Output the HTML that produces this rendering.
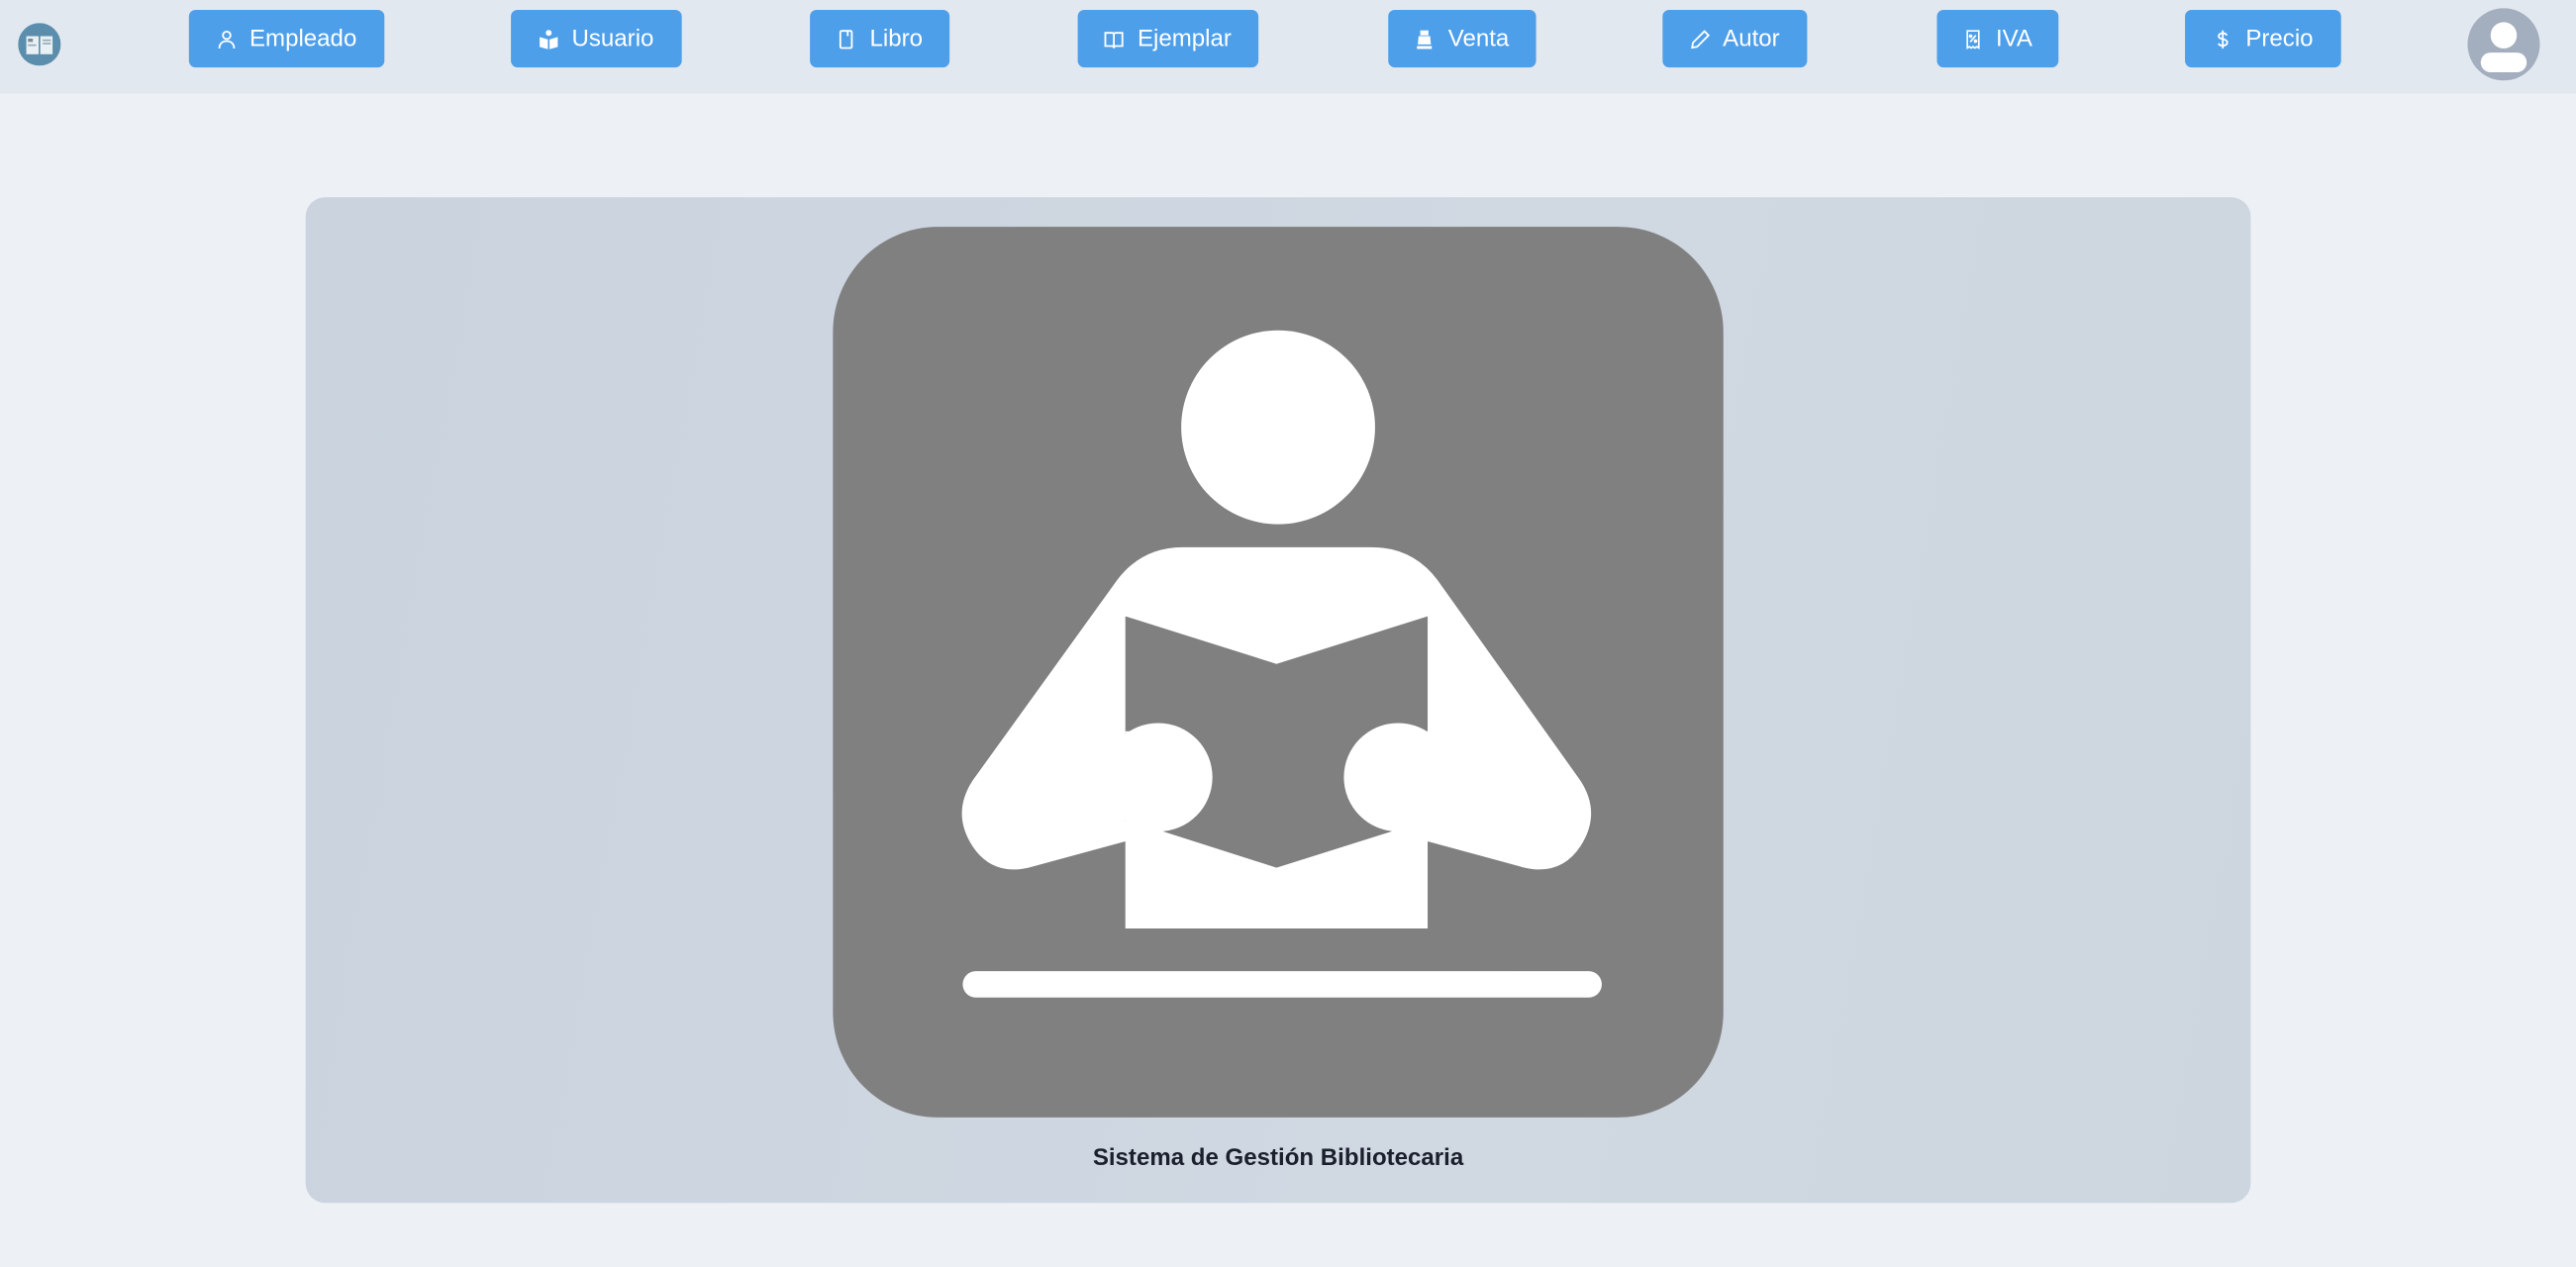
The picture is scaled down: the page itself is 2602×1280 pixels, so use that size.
<!DOCTYPE html>
<html><head><meta charset="utf-8"><style>
html,body{margin:0;padding:0;width:2602px;height:1280px;overflow:hidden;background:#edf1f6;font-family:"Liberation Sans",sans-serif}
#w{position:absolute;left:0;top:0;width:1568px;height:771px;transform:scale(1.65944,1.66018);transform-origin:0 0}
.nav{position:absolute;left:0;top:0;width:1568px;height:57px;background:#e2e8f0}
.btn{position:absolute;top:6px;height:35px;background:#4e9fea;border-radius:4px;color:#fff;font-size:14.5px;display:flex;align-items:center;justify-content:center;gap:8px;padding-top:1px;box-sizing:border-box}
.btn svg{width:12px;height:12px}
.card{position:absolute;left:186px;top:120px;width:1184px;height:612px;border-radius:12px;background:linear-gradient(100deg,#cad3de,#d0d8e2 60%,#cdd5df)}
.cap{position:absolute;left:186px;width:1184px;top:697px;text-align:center;font-weight:bold;font-size:14.5px;color:#1a202c}
</style></head><body><div id="w">
<div class="nav">
 <svg style="position:absolute;left:11px;top:14px" width="26" height="26" viewBox="0 0 26 26"><circle cx="13" cy="13" r="13" fill="#5b8eac"/><rect x="5" y="8" width="7.5" height="11" fill="#e8f0f3"/><rect x="13.5" y="8" width="7.5" height="11" fill="#e8f0f3"/><rect x="6" y="9.5" width="3" height="2" fill="#7a8d99"/><rect x="6" y="13" width="5" height="1" fill="#9ab"/><rect x="15" y="10" width="5" height="1" fill="#9ab"/><rect x="15" y="12" width="5" height="1" fill="#9ab"/></svg>
 <div class="btn" style="left:115px;width:119px"><svg viewBox="0 0 12 12" fill="none" stroke="#fff" stroke-width="1.1"><circle cx="6" cy="3.5" r="2.3"/><path d="M1.5 11.5c0-3 2-4.5 4.5-4.5s4.5 1.5 4.5 4.5"/></svg>Empleado</div>
 <div class="btn" style="left:311px;width:104px"><svg viewBox="0 0 12 12" fill="#fff"><circle cx="6" cy="2" r="1.8"/><path d="M0.5 4.5l5 1.5v6l-5-1.5zM11.5 4.5l-5 1.5v6l5-1.5z"/></svg>Usuario</div>
 <div class="btn" style="left:493px;width:85px"><svg viewBox="0 0 12 12" fill="none" stroke="#fff" stroke-width="1.1"><rect x="2.5" y="0.8" width="7" height="10.4" rx="0.8"/><path d="M7 1v3"/></svg>Libro</div>
 <div class="btn" style="left:656px;width:110px"><svg viewBox="0 0 12 12" fill="none" stroke="#fff" stroke-width="1.1"><path d="M0.8 2h4.5l0.7 0.8 0.7-0.8h4.5v8h-4.5l-0.7 0.8-0.7-0.8h-4.5zM6 2.8v8"/></svg>Ejemplar</div>
 <div class="btn" style="left:845px;width:90px"><svg viewBox="0 0 12 12" fill="#fff"><rect x="3.5" y="0.5" width="5" height="3"/><path d="M2.5 4h7l0.5 5h-8z"/><rect x="1.5" y="10" width="9" height="1.8"/></svg>Venta</div>
 <div class="btn" style="left:1012px;width:88px"><svg viewBox="0 0 12 12" fill="none" stroke="#fff" stroke-width="1.1"><path d="M8.5 1l2.5 2.5-7 7-3 0.5 0.5-3z"/></svg>Autor</div>
 <div class="btn" style="left:1179px;width:74px"><svg viewBox="0 0 12 12" fill="none" stroke="#fff" stroke-width="1"><path d="M2.5 0.8h7v10.4l-1.2-0.8-1.2 0.8-1.1-0.8-1.1 0.8-1.2-0.8-1.2 0.8z"/><path d="M4.3 7.5l3.4-4"/><circle cx="4.5" cy="4" r="0.6"/><circle cx="7.5" cy="7" r="0.6"/></svg>IVA</div>
 <div class="btn" style="left:1330px;width:95px"><svg viewBox="0 0 12 12" fill="none" stroke="#fff" stroke-width="1.1"><path d="M8.5 3.5C8 2.5 7 2.2 6 2.2 4.5 2.2 3.5 3 3.5 4s1 1.5 2.5 1.8 2.7 0.8 2.7 2-1.2 2-2.7 2c-1.2 0-2.2-0.5-2.7-1.3M6 0.5v11"/></svg>Precio</div>
 <svg style="position:absolute;left:1502px;top:5px" width="44" height="44" viewBox="0 0 44 44"><circle cx="22" cy="22" r="22" fill="#a3aebe"/><circle cx="22" cy="16.5" r="8" fill="#fff"/><rect x="8" y="27" width="28" height="12" rx="6" fill="#fff"/></svg>
</div>
<div class="card"></div>
<svg style="position:absolute;left:0;top:0" width="1568" height="771" viewBox="0 0 1568 771">
 <rect x="507" y="138" width="542" height="542" rx="64" fill="#808080"/>
 <circle cx="778" cy="260" r="59" fill="#fff"/>
 <path fill="#fff" d="M720 333H835Q860 333 875 353L962 475Q975 495 962 515Q950 533 928 528L869 512V565H685V512L626 528Q604 533 592 515Q579 495 592 475L680 353Q695 333 720 333Z"/>
 <path fill="#808080" d="M685 375L777 404L869 375V500H845L847 506L777 528L708 506L710 500H685Z"/>
 <ellipse cx="705" cy="473" rx="33" ry="33" fill="#fff"/>
 <ellipse cx="851" cy="473" rx="33" ry="33" fill="#fff"/>
 <rect x="685" y="445" width="18" height="61" fill="#fff"/>
 <rect x="853" y="445" width="16" height="61" fill="#fff"/>
 <rect x="586" y="591" width="389" height="16" rx="8" fill="#fff"/>
</svg>
<div class="cap">Sistema de Gestión Bibliotecaria</div>
</div></body></html>
